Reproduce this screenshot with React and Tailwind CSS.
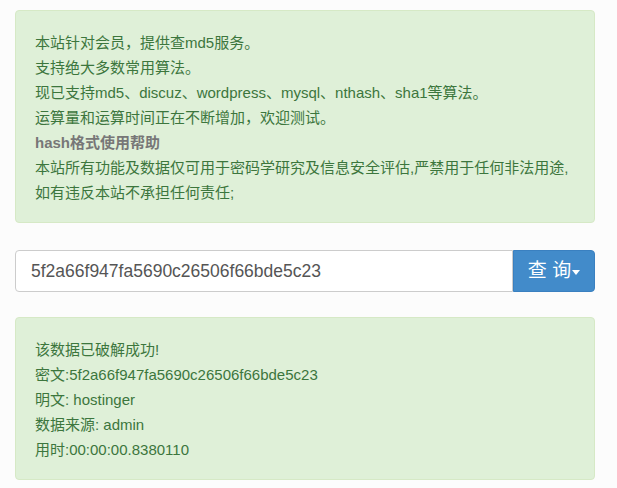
import React, { useState } from 'react';

const font = { fontFamily: '"Liberation Sans", "Noto Sans CJK SC", sans-serif' };

const introLines = [
  '本站针对会员，提供查md5服务。',
  '支持绝大多数常用算法。',
  '现已支持md5、discuz、wordpress、mysql、nthash、sha1等算法。',
  '运算量和运算时间正在不断增加，欢迎测试。',
];

const App = () => {
  const [hash, setHash] = useState('5f2a66f947fa5690c26506f66bde5c23');

  return (
    <div className="min-h-[488px] w-[617px] bg-[#fcfcfc] pt-[10px] pl-[15px]" style={font}>
      <div className="w-[580px] flex flex-col">
        {/* intro alert */}
        <div className="rounded-[4px] border border-[#d6e9c6] bg-[#dff0d8] px-[19px] pt-[19px] pb-[17px] text-[15px] leading-[25px] text-[#3c763d]">
          {introLines.map((line) => (
            <div key={line}>{line}</div>
          ))}
          <div className="font-bold text-[#777]">hash格式使用帮助</div>
          <div>本站所有功能及数据仅可用于密码学研究及信息安全评估,严禁用于任何非法用途,</div>
          <div>如有违反本站不承担任何责任;</div>
        </div>

        {/* search */}
        <div className="mt-[27px] flex h-[42px]">
          <input
            value={hash}
            onChange={(e) => setHash(e.target.value)}
            className="h-full flex-1 rounded-l-[4px] border border-[#ccc] bg-white px-[15px] text-[17.5px] text-[#555] outline-none"
            style={font}
          />
          <button className="flex h-full w-[82px] items-center justify-center rounded-r-[4px] border border-[#3a80c0] bg-[#428bca] text-[19px] text-white">
            <span>查 询</span>
            <span className="ml-[1px] mt-[2px] inline-block h-0 w-0 border-x-[4px] border-t-[5px] border-x-transparent border-t-white" />
          </button>
        </div>

        {/* result alert */}
        <div className="mt-[25px] rounded-[4px] border border-[#d6e9c6] bg-[#dff0d8] px-[19px] pt-[19px] pb-[17px] text-[15px] leading-[25px] text-[#3c763d]">
          <div>该数据已破解成功!</div>
          <div>密文:5f2a66f947fa5690c26506f66bde5c23</div>
          <div>明文: hostinger</div>
          <div>数据来源: admin</div>
          <div>用时:00:00:00.8380110</div>
        </div>
      </div>
    </div>
  );
};

export default App;
